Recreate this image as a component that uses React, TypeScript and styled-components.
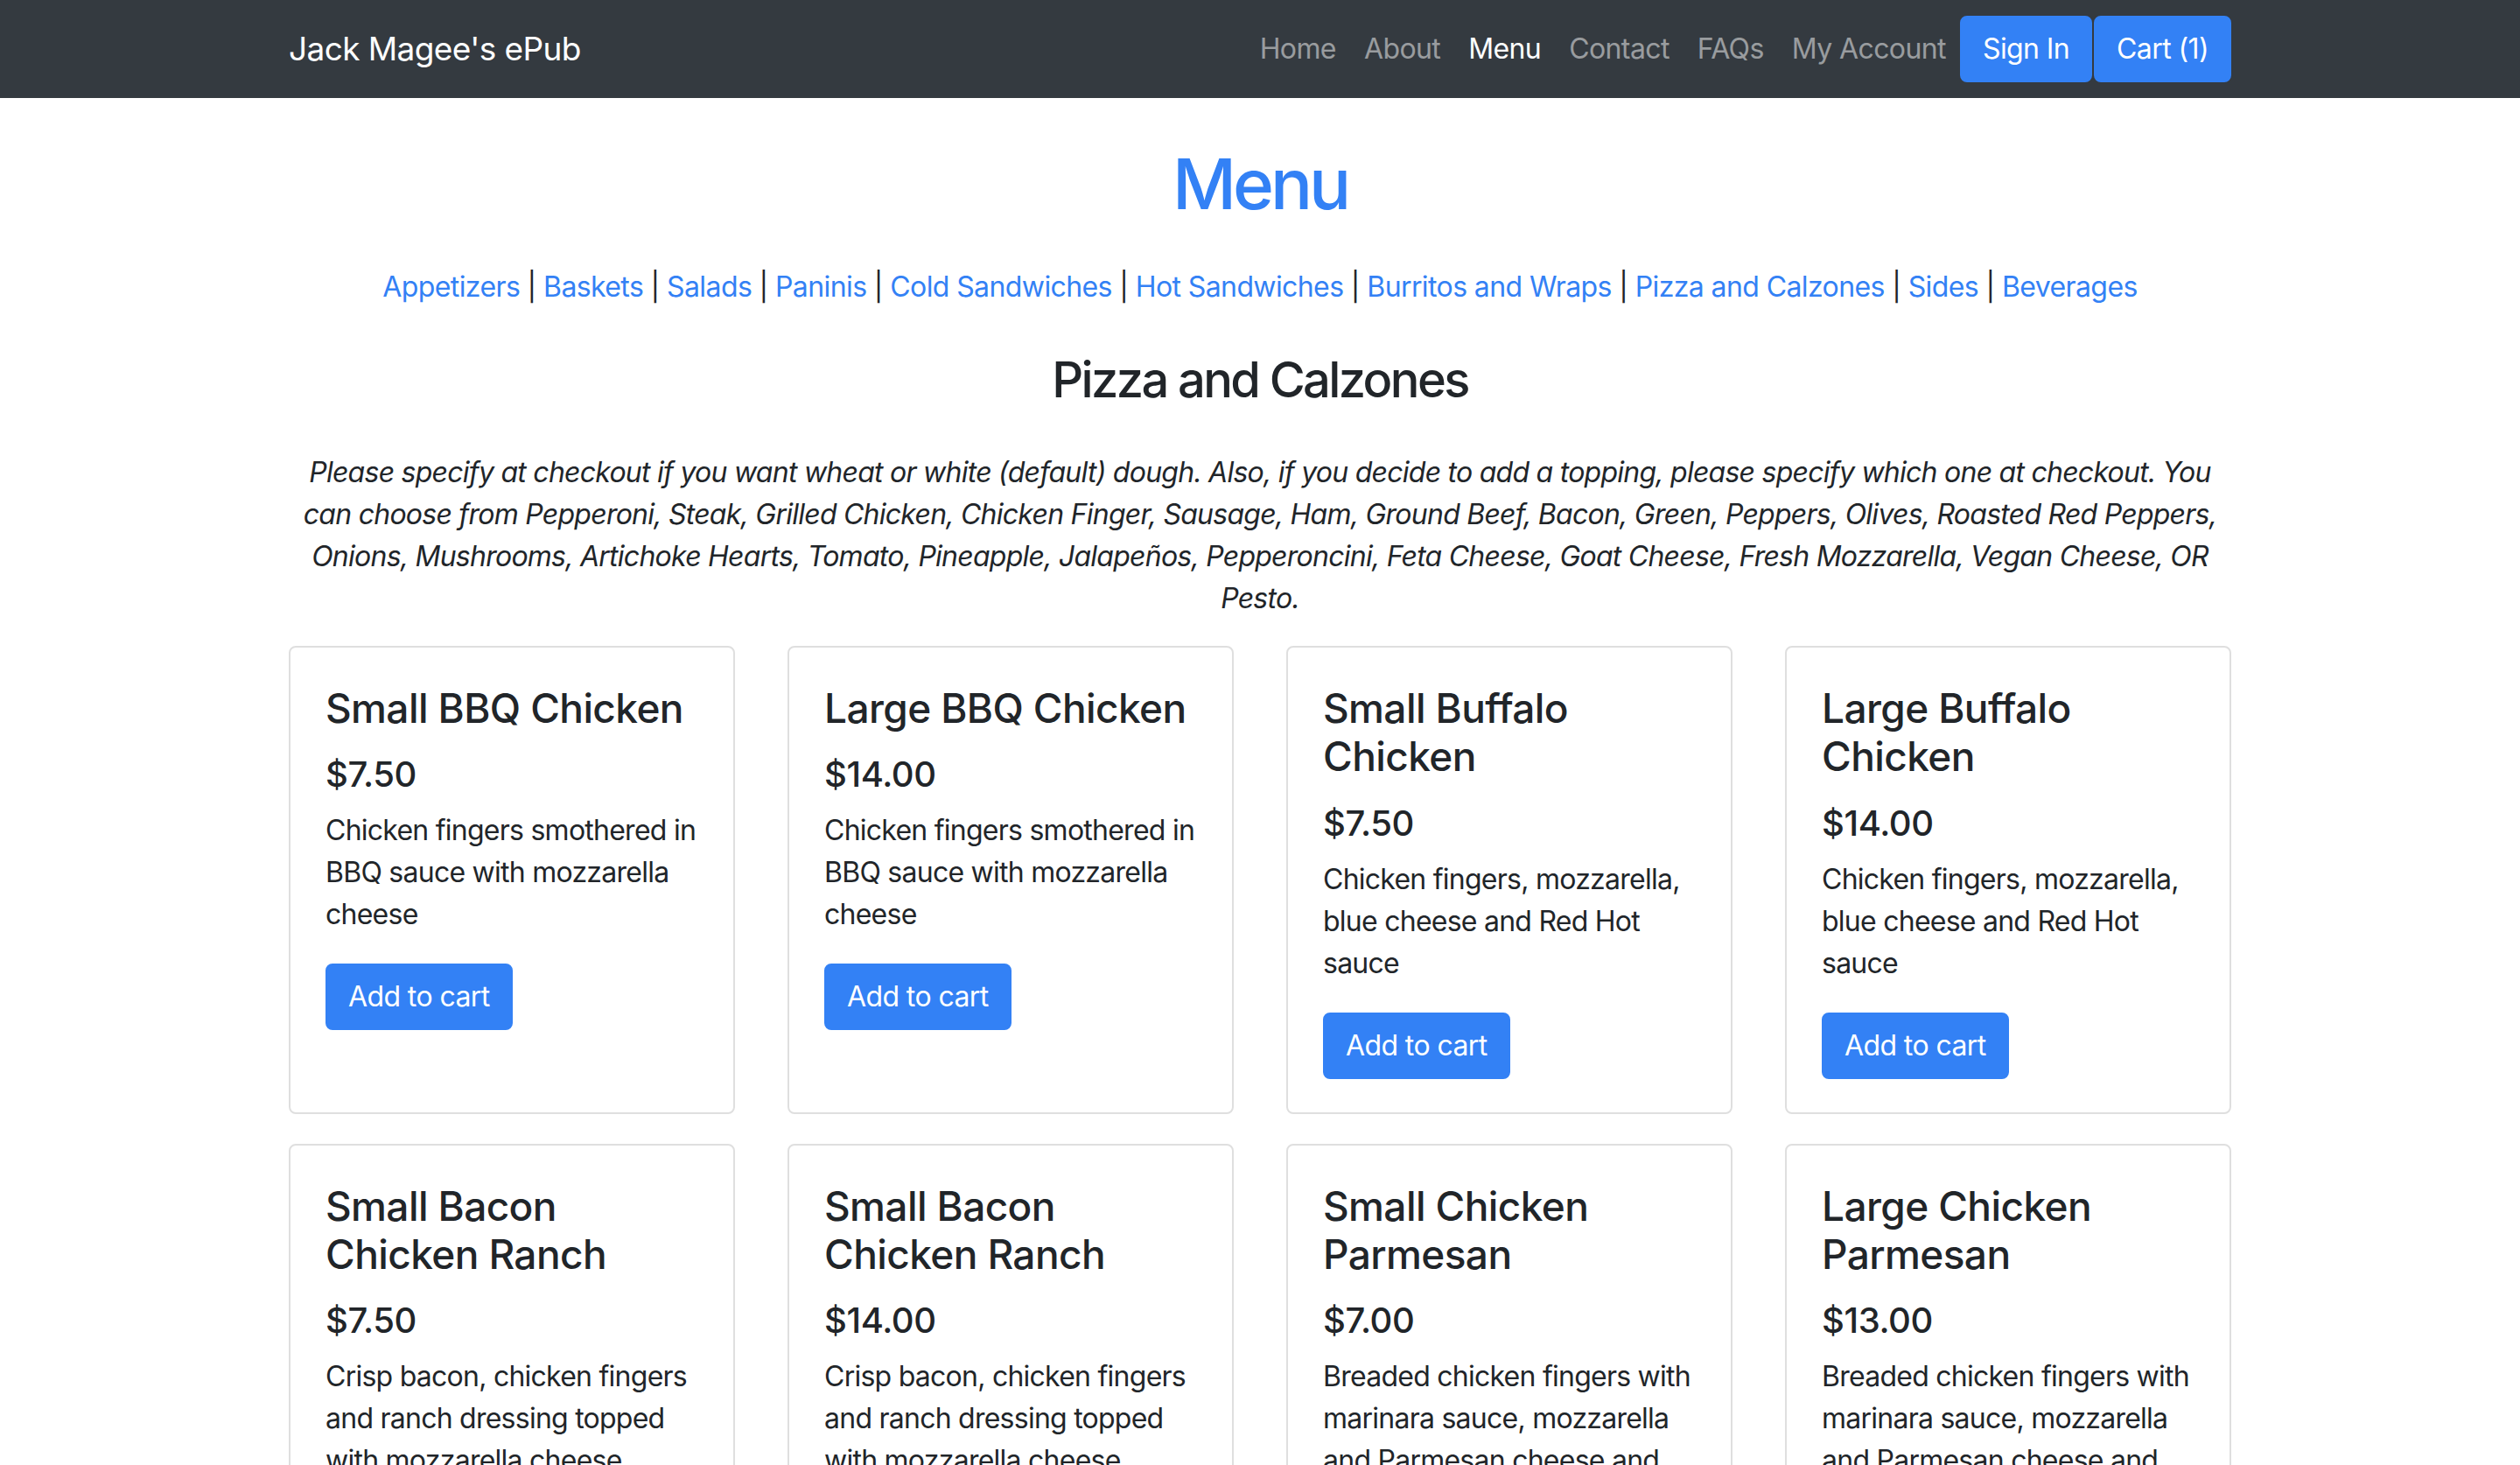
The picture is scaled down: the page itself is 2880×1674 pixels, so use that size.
import React from "react";
import styled, { createGlobalStyle } from "styled-components";

const BLUE = "#3381f5";
const DARK = "#212529";

const GlobalStyle = createGlobalStyle`
  html, body {
    margin: 0;
    padding: 0;
    background: #ffffff;
  }
  body {
    font-family: Inter, "Noto Sans", "Helvetica Neue", Arial, sans-serif;
    font-size: 32px;
    line-height: 1.5;
    letter-spacing: -0.6px;
    color: ${DARK};
  }
  * { box-sizing: border-box; }
`;

const Navbar = styled.nav`
  background: #343a40;
  padding: 16px 32px;
`;

const NavInner = styled.div`
  width: 2220px;
  margin: 0 auto;
  display: flex;
  align-items: center;
  justify-content: space-between;
`;

const Brand = styled.a`
  font-size: 37px;
  line-height: 60px;
  padding: 10px 0;
  color: #ffffff;
  text-decoration: none;
  white-space: nowrap;
  letter-spacing: -0.6px;
`;

const NavList = styled.div`
  display: flex;
  align-items: center;
`;

const NavLink = styled.a<{ $active?: boolean }>`
  padding: 16px;
  font-size: 32px;
  line-height: 48px;
  color: ${(p) => (p.$active ? "#ffffff" : "rgba(255,255,255,0.5)")};
  text-decoration: none;
  white-space: nowrap;
`;

const Button = styled.a<{ $gap?: number }>`
  display: inline-block;
  background: ${BLUE};
  border: 2px solid ${BLUE};
  border-radius: 8px;
  color: #ffffff;
  font-size: 32px;
  line-height: 48px;
  padding: 12px 24px;
  text-decoration: none;
  white-space: nowrap;
  margin-left: ${(p) => p.$gap ?? 0}px;
`;

const Main = styled.main`
  width: 2220px;
  margin: 0 auto;
  padding-bottom: 80px;
`;

const Title = styled.h1`
  margin: 50px 0 46px;
  font-size: 80px;
  line-height: 96px;
  font-weight: 500;
  color: ${BLUE};
  text-align: center;
  letter-spacing: -4px;
`;

const Categories = styled.p`
  margin: 0 0 49px;
  text-align: center;
  font-size: 32px;
  line-height: 48px;
`;

const CatLink = styled.a`
  color: ${BLUE};
  text-decoration: none;
`;

const Section = styled.h3`
  margin: 0 0 48px;
  font-size: 56px;
  line-height: 67.2px;
  font-weight: 500;
  text-align: center;
  letter-spacing: -2.6px;
`;

const Note = styled.p`
  margin: 0 0 30px;
  font-style: italic;
  text-align: center;
  font-size: 32px;
  line-height: 48px;
  letter-spacing: -0.75px;
`;

const Grid = styled.div`
  display: grid;
  grid-template-columns: repeat(4, 1fr);
  column-gap: 60px;
  row-gap: 34px;
`;

const Card = styled.div`
  border: 2px solid #dfdfdf;
  border-radius: 8px;
  padding: 42px 40px 38px;
  background: #fff;
`;

const CardTitle = styled.h4`
  margin: 0 0 24px;
  font-size: 46px;
  line-height: 55.2px;
  font-weight: 500;
  letter-spacing: -0.6px;
`;

const Price = styled.h5`
  margin: 0 0 16px;
  font-size: 40px;
  line-height: 48px;
  font-weight: 500;
  letter-spacing: -0.4px;
`;

const Desc = styled.p`
  margin: 0 0 32px;
  font-size: 32px;
  line-height: 48px;
  letter-spacing: -0.75px;
`;

const Sep = styled.span`
  color: ${DARK};
`;

const categories = [
  "Appetizers",
  "Baskets",
  "Salads",
  "Paninis",
  "Cold Sandwiches",
  "Hot Sandwiches",
  "Burritos and Wraps",
  "Pizza and Calzones",
  "Sides",
  "Beverages",
];

const items = [
  { name: "Small BBQ Chicken", price: "$7.50", desc: "Chicken fingers smothered in BBQ sauce with mozzarella cheese" },
  { name: "Large BBQ Chicken", price: "$14.00", desc: "Chicken fingers smothered in BBQ sauce with mozzarella cheese" },
  { name: "Small Buffalo Chicken", price: "$7.50", desc: "Chicken fingers, mozzarella, blue cheese and Red Hot sauce" },
  { name: "Large Buffalo Chicken", price: "$14.00", desc: "Chicken fingers, mozzarella, blue cheese and Red Hot sauce" },
  { name: "Small Bacon Chicken Ranch", price: "$7.50", desc: "Crisp bacon, chicken fingers and ranch dressing topped with mozzarella cheese" },
  { name: "Small Bacon Chicken Ranch", price: "$14.00", desc: "Crisp bacon, chicken fingers and ranch dressing topped with mozzarella cheese" },
  { name: "Small Chicken Parmesan", price: "$7.00", desc: "Breaded chicken fingers with marinara sauce, mozzarella and Parmesan cheese and baked" },
  { name: "Large Chicken Parmesan", price: "$13.00", desc: "Breaded chicken fingers with marinara sauce, mozzarella and Parmesan cheese and baked" },
];

export default function App() {
  return (
    <>
      <GlobalStyle />
      <Navbar>
        <NavInner>
          <Brand href="#">Jack Magee's ePub</Brand>
          <NavList>
            <NavLink href="#">Home</NavLink>
            <NavLink href="#">About</NavLink>
            <NavLink href="#" $active>Menu</NavLink>
            <NavLink href="#">Contact</NavLink>
            <NavLink href="#">FAQs</NavLink>
            <NavLink href="#">My Account</NavLink>
            <Button href="#">Sign In</Button>
            <Button href="#" $gap={2}>Cart (1)</Button>
          </NavList>
        </NavInner>
      </Navbar>
      <Main>
        <Title>Menu</Title>
        <Categories>
          {categories.map((c, i) => (
            <React.Fragment key={c}>
              {i > 0 && <Sep> | </Sep>}
              <CatLink href="#">{c}</CatLink>
            </React.Fragment>
          ))}
        </Categories>
        <Section>Pizza and Calzones</Section>
        <Note>
          Please specify at checkout if you want wheat or white (default) dough. Also, if you decide to add a topping, please specify which one at checkout. You can choose from Pepperoni, Steak, Grilled Chicken, Chicken Finger, Sausage, Ham, Ground Beef, Bacon, Green, Peppers, Olives, Roasted Red Peppers, Onions, Mushrooms, Artichoke Hearts, Tomato, Pineapple, Jalapeños, Pepperoncini, Feta Cheese, Goat Cheese, Fresh Mozzarella, Vegan Cheese, OR Pesto.
        </Note>
        <Grid>
          {items.map((it, i) => (
            <Card key={i}>
              <CardTitle>{it.name}</CardTitle>
              <Price>{it.price}</Price>
              <Desc>{it.desc}</Desc>
              <Button href="#">Add to cart</Button>
            </Card>
          ))}
        </Grid>
      </Main>
    </>
  );
}
